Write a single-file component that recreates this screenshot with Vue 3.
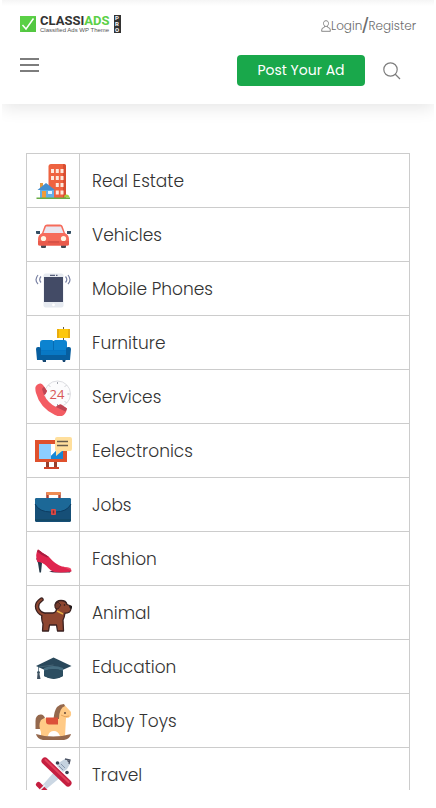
<template>
  <div class="page">
    <header class="site-header">
      <div class="header-row top-row">
        <a href="#" class="logo">
          <svg class="logo-mark" viewBox="0 0 16 16" aria-hidden="true">
            <rect width="16" height="16" fill="#5bd047" />
            <path d="M1 16 15 1h1v15z" fill="#4cbd3b" opacity=".5" />
            <path d="M2.500 9 6 13 13.500 2.500" fill="none" stroke="#fff" stroke-width="1.500" />
          </svg>
          <span class="logo-text">
            <span class="logo-name">CLASSI<span class="logo-accent">ADS</span></span>
            <span class="logo-tagline">Classified Ads WP Theme</span>
          </span>
          <span class="logo-badge"><span>P</span><span>R</span><span>O</span></span>
        </a>
        <nav class="account">
          <a href="#" class="account-link">
            <svg class="user-icon" viewBox="0 0 10 12" aria-hidden="true">
              <path d="M5 .7c1.600 0 2.500 1.100 2.500 2.700S6.500 6.500 5 6.500 2.500 5 2.500 3.400 3.400.7 5 .7zM3.500 6.200v1L1 8.500l-.4 2.800h8.800L9 8.500 6.500 7.200v-1" fill="none" stroke="#7d7d7d" stroke-width=".9" />
            </svg>
            Login
          </a>
          <span class="slash">/</span>
          <a href="#" class="account-link">Register</a>
        </nav>
      </div>
      <div class="header-row">
        <button type="button" class="menu-btn" aria-label="Menu">
          <span></span><span></span><span></span>
        </button>
        <div class="actions">
          <button type="button" class="post-btn">Post Your Ad</button>
          <button type="button" class="search-btn" aria-label="Search">
            <svg viewBox="0 0 18 18" aria-hidden="true">
              <circle cx="7.500" cy="7.500" r="6.700" />
              <path d="m12 12 5 5" />
            </svg>
          </button>
        </div>
      </div>
    </header>

    <main class="content">
      <table class="categories">
        <tbody>
          <tr v-for="category in categories" :key="category.name">
            <td class="icon-cell">
              <svg class="category-icon" viewBox="0 0 38 38" aria-hidden="true" v-html="category.icon"></svg>
            </td>
            <td class="name-cell">{{ category.name }}</td>
          </tr>
        </tbody>
      </table>
    </main>
  </div>
</template>

<script setup>
const categories = [
  {
    name: 'Real Estate',
    icon: `
      <rect x="14.500" y="2" width="17.500" height="34" rx="2.500" fill="#ee6340"/>
      <path d="M29 2h1a2 2 0 0 1 2 2v32h-3z" fill="#d94d31"/>
      <path d="M17 7h3v4h-3zM21.800 7h3v4h-3zM26.500 7h3v4h-3zM17 14h3v4h-3zM21.800 14h3v4h-3zM26.500 14h3v4h-3zM21.800 21h3v4h-3zM26.500 21h3v4h-3zM21.800 28.500h3v4h-3zM26.500 28.500h3v4h-3z" fill="#fde9dd"/>
      <path d="M6 21h3v5H6z" fill="#e39b3f"/>
      <path d="M6 27h14v9H6z" fill="#62aee8"/>
      <path d="m3.500 28 8.500-7 9 7z" fill="#458fce"/>
      <path d="M8 29h4v7H8z" fill="#f19b39"/>
      <path d="M14 29h4v3h-4z" fill="#e2f4ff"/>
      <path d="M30 35.500q0-3 2.500-3t3 3z" fill="#a7ce3d"/>
      <path d="M2.500 35.500h33.500V37h-33.500z" fill="#68ad45"/>`
  },
  {
    name: 'Vehicles',
    icon: `
      <path d="M7 27h5v4q0 1-1 1H8q-1 0-1-1zM27 27h5v4q0 1-1 1h-3q-1 0-1-1z" fill="#424953"/>
      <path d="M2 15h4v3H3q-1 0-1-1zM33 15h4v2q0 1-1 1h-3z" fill="#344e63"/>
      <path d="M8 17l2.500-7Q11 8.500 13 8.500h13q2 0 2.500 1.500L31 17q4 2 4 6v5q0 1.500-2 1.500H6q-2 0-2-1.500v-5q0-4 4-6z" fill="#f66b5a"/>
      <path d="m9.500 17 2.500-6.500h15L29.500 17z" fill="#e9e6ef"/>
      <path d="M4 25h31v3q0 1.500-2 1.500H6q-2 0-2-1.500z" fill="#e95b4c"/>
      <circle cx="9.500" cy="22.500" r="2.600" fill="#fff6e5"/>
      <circle cx="29.500" cy="22.500" r="2.600" fill="#fff6e5"/>
      <path d="M14 26h11" stroke="#c94a42"/>`
  },
  {
    name: 'Mobile Phones',
    icon: `
      <rect x="9.500" y="3.500" width="20" height="34" rx="2" fill="#e6eaf0"/>
      <path d="M10 7h19v25H10z" fill="#434b66"/>
      <path d="M16 5.300h5M22 5.300h1.500" stroke="#58607b" stroke-width="1.300"/>
      <circle cx="19.500" cy="34.800" r="1.400" fill="#fff"/>
      <path d="M4 5q-4 5 0 9M7 6.500q-2.600 3 0 6M34 5q4 5 0 9M31.500 6.500q2.600 3 0 6" fill="none" stroke="#7b83a5" stroke-width="1.200"/>`
  },
  {
    name: 'Furniture',
    icon: `
      <path d="M29.500 3v15" stroke="#665c4f" stroke-width="1"/>
      <path d="M23 5h13v9H23z" fill="#fdc70c"/>
      <path d="M23 5h2v9h-2zM34 5h2v9h-2z" fill="#e9ac0e"/>
      <path d="M8 35h4v3H9zM28 35h4l-1 3h-2z" fill="#164772"/>
      <path d="M6 19q0-3 3-3h9l1.500 1 1.500-1h9q3 0 3 3v12H6z" fill="#0c83d0"/>
      <path d="M19.500 17v10" stroke="#066cb3"/>
      <path d="M5 26h29v9H5z" fill="#0575c4"/>
      <path d="M2 25q0-2 2-2h1q2 0 2 2v5h25v-5q0-2 2-2h1q2 0 2 2l-1 11H3z" fill="#075e9f"/>
      <path d="M7 27h25v4H7z" fill="#0878c5"/>`
  },
  {
    name: 'Services',
    icon: `
      <circle cx="23.500" cy="16" r="13" fill="#fcfcfd" stroke="#dedfe3"/>
      <path d="M23.500 4v2M23.500 26v2M33.500 16h2M15 7.500l1 1M32 7.500l-1 1M32 24.500l-1-1" stroke="#a4a9b1"/>
      <text x="15.500" y="21" font-family="Open Sans, sans-serif" font-size="13" fill="#d95858">24</text>
      <path d="M1.500 9q1-3 4.500-3.500Q7.500 5 9 7l4 6q-1 3-3 4 4 8 12 12 2-3 5-2.500l6 4q-1 6-5 7.500-3 1-7-1Q6 30 2 15q-1-4-.5-6z" fill="#f35c63"/>
      <path d="m10 8.500 3 4.500q-1 3-3 4l-2-6zM22 29q2-3 5-2.500l6 4-1.500 3z" fill="#be4654"/>`
  },
  {
    name: 'Eelectronics',
    icon: `
      <path d="M12 30h3v6h-3zM20 30h3v6h-3z" fill="#96402d"/>
      <path d="M10 35h15v2H10z" fill="#cf4327"/>
      <path d="M1 8h32v22H1z" fill="#df512d"/>
      <path d="M5 12h24v15H5z" fill="#229ce5"/>
      <path d="M5 12h12v15H5z" fill="#8cceff"/>
      <path d="M17 12h12v7h-7l-5 5z" fill="#fff"/>
      <path d="M17 27v-3l5-5h7v8z" fill="#1687d5"/>
      <path d="M23 5h13q2 0 2 2v10q0 2-2 2h-8l-6 5v-5q-1 0-1-2V7q0-2 2-2z" fill="#ffdf9c"/>
      <path d="M23 9.500h11M23 13.500h11" stroke="#675c4b" stroke-width="1.400"/>`
  },
  {
    name: 'Jobs',
    icon: `
      <path d="M13.500 13V7.500h12V13" fill="none" stroke="#ac4032" stroke-width="2.500"/>
      <path d="M12.500 6h14v3h-14z" fill="#ef8c52"/>
      <rect x="1" y="12" width="36" height="24" rx="1.500" fill="#164f77"/>
      <path d="M1 14q0-2 2-2h32q2 0 2 2v4q-4 8-16 8h-4Q5 26 1 18z" fill="#1c6897"/>
      <path d="M1 18q4 8 16 8h4q12 0 16-8" fill="none" stroke="#0c3c61"/>
      <path d="M1 34h36" stroke="#11445b"/>
      <rect x="17" y="23" width="5" height="6" rx="1" fill="#db4945"/>
      <path d="M19.500 24.500v3" stroke="#752b35" stroke-width="1.500"/>`
  },
  {
    name: 'Fashion',
    icon: `
      <path d="M2 18q4 2 6 5l-1 9.500H5.500L4 23z" fill="#253a49"/>
      <path d="M15 31q3 1.500 6 1.500h15l1-2z" fill="#432d45"/>
      <path d="M4 9.500q4 3 11 7.500 7 8 13 9.500l8 1.500q1.500 1 1.500 3.500-10 1.500-17 .5-4-1-8-6-4-4-9-4-3-7 .5-12.500z" fill="#df254e"/>
      <path d="M4 9.500q4 3 11 7.500l-2 .5Q7 15 3 11.500z" fill="#a91d40"/>
      <path d="m28 26.500 8 1.500 1.500 2.500z" fill="#ed4664"/>`
  },
  {
    name: 'Animal',
    icon: `
      <path d="M7.500 5.500Q1 10 4 16q2 4 7 5" fill="none" stroke="#3a2120" stroke-width="4.400" stroke-linecap="round"/>
      <path d="M8 21q1-2 4-2h7q2 0 3.500-3l-1.500-5q1-4.500 6-4.500 5 0 6 4l4 1.500q.5 4-1.500 6-3 1.500-4.500 1-.5 4-2 7l.5 11h-6l-1-6h-7l-1 6H8.500l.5-7q-2-5-1-9z" fill="#8e4630" stroke="#3a2120" stroke-width="1.300" stroke-linejoin="round"/>
      <path d="M7.500 5.500Q1 10 4 16q2 4 7 5" fill="none" stroke="#8e4630" stroke-width="2" stroke-linecap="round"/>
      <path d="M24 8q-4 2-3 6l3 1 3-4z" fill="#743a2b" stroke="#3a2120" stroke-width=".8"/>
      <path d="m23 17 6 3" stroke="#e5ae45" stroke-width="1.500"/>
      <circle cx="30.500" cy="11" r=".8" fill="#241817"/>
      <path d="M35 12h3v2.500h-2z" fill="#211b1c"/>`
  },
  {
    name: 'Education',
    icon: `
      <path d="M10 19h19v9q-9 6-19 0z" fill="#244252"/>
      <path d="M19.500 9.500 37.500 18 19.500 26 2 18z" fill="#29485b"/>
      <path d="M10 20q9-4 19 0v3q-9-4-19 0z" fill="#466d80"/>
      <path d="M10 23q9-4 19 0v5q-9 5-19 0z" fill="#2c4d60"/>
      <path d="m19.500 17-15 2v5" fill="none" stroke="#4b6a7a" stroke-width=".8"/>
      <circle cx="4.500" cy="24.500" r="1.500" fill="#3b5361"/>
      <path d="M3.500 26h2l1 5H3z" fill="#3e5060"/>`
  },
  {
    name: 'Baby Toys',
    icon: `
      <path d="M1.500 27V19q0-6 5-6.500 3-.5 4.500 3.500l-4 3v8z" fill="#94684d"/>
      <path d="M7 34v-4q-3-7 0-12 2-2 6-2h7l4-8q2-5 7-4.500l6 6.500q1 6-5 6l-1 18h-5q-2-5-6-5-5 0-6 5z" fill="#ffca86"/>
      <path d="M19.500 17q1-9 3.500-12 3-3 7-3l1 2q-6 2-6 13z" fill="#94684d"/>
      <path d="M12 15.500h12v7H15q-3 0-3-3z" fill="#dc5039"/>
      <path d="M27 13q4 3 8 1" fill="none" stroke="#e7a45c"/>
      <circle cx="31" cy="11" r=".9" fill="#553a30"/>
      <path d="M2 32q17 5 35 0-1 5-7 6H9q-6-1-7-6z" fill="#94684d"/>`
  },
  {
    name: 'Travel',
    icon: `
      <path d="m26 6 5-3 5 5-3 5-4 3-6-6z" fill="#c5d2df"/>
      <path d="m31 3 5 1-1 4M33 4l2 2" fill="none" stroke="#4a5263" stroke-width="1.300"/>
      <path d="m27 8 4 4M25 10l4 4" stroke="#8797ae"/>
      <path d="M21 15 6 32l4 3 18-15z" fill="#cbd7e3"/>
      <path d="m11 5 23 22" stroke="#c51f40" stroke-width="7" stroke-linecap="round"/>
      <path d="m11.500 4 23 22" stroke="#e0415a" stroke-width="2" stroke-linecap="round"/>
      <path d="m4.500 28.500 8 8" stroke="#c51f40" stroke-width="5" stroke-linecap="round"/>
      <path d="m6 34 5-5" stroke="#eef1f5" stroke-width="1.500"/>
      <circle cx="23.500" cy="7" r="1.800" fill="#3a4252"/>
      <circle cx="33" cy="16.500" r="1.800" fill="#3a4252"/>`
  }
];
</script>

<style>
body {
  margin: 0;
  background: #fff;
}
</style>

<style scoped>
.page {
  height: calc(100vh - 18px);
  margin: 0 2px;
  overflow: hidden;
  background: #fff;
  color: #333;
  font-family: Poppins, Inter, "Open Sans", sans-serif;
}
.site-header {
  display: flex;
  flex-direction: column;
  gap: 16px;
  padding: 12px 18px 18px;
  background: linear-gradient(#f5f5f5, #fff 6px);
  box-shadow: 0 4px 16px rgba(0, 0, 0, 0.1);
}
.header-row {
  display: flex;
  align-items: center;
  justify-content: space-between;
}
.top-row {
  height: 27px;
}
a {
  color: inherit;
  text-decoration: none;
}
button {
  padding: 0;
  border: 0;
  background: none;
  font-family: inherit;
  cursor: pointer;
}
.logo {
  display: flex;
  align-items: center;
  align-self: flex-start;
  height: 23px;
  gap: 4px;
}
.logo-mark {
  width: 16px;
  height: 16px;
}
.logo-text {
  display: flex;
  flex-direction: column;
}
.logo-name {
  font: bold 13px/12px Roboto, sans-serif;
  color: #333;
}
.logo-accent {
  color: #5bd047;
}
.logo-tagline {
  font: 6px/6px "Liberation Sans", sans-serif;
  color: #555;
}
.logo-badge {
  display: flex;
  flex-direction: column;
  align-items: center;
  width: 7px;
  background: #333;
  color: #fff;
  font: bold 6px/6px Roboto, sans-serif;
}
.account {
  display: flex;
  align-items: center;
  height: 32px;
  color: #6c6c6c;
}
.account-link {
  display: flex;
  align-items: center;
  font-size: 12px;
  font-weight: 300;
  line-height: 20px;
}
.user-icon {
  width: 10px;
  height: 12px;
}
.slash {
  font: 22px/24px "Liberation Sans", sans-serif;
}
.menu-btn {
  display: flex;
  flex-direction: column;
  align-self: flex-start;
  gap: 4px;
  padding: 3px 0;
}
.menu-btn span {
  width: 19px;
  height: 2px;
  background: #7d7d7d;
}
.actions {
  display: flex;
  align-items: center;
  gap: 18px;
  padding-right: 15px;
}
.post-btn {
  width: 128px;
  height: 31px;
  border-radius: 4px;
  background: #19a84b;
  color: #fff;
  font-size: 14px;
}
.search-btn {
  width: 18px;
  height: 22px;
}
.search-btn svg {
  display: block;
  width: 18px;
  height: 18px;
  fill: none;
  stroke: #7d7d7d;
  stroke-width: 1.2;
}
.content {
  padding: 49px 24px;
}
.categories {
  width: 100%;
  border-collapse: collapse;
}
.categories td {
  height: 53px;
  padding: 0;
  border: 1px solid #ccc;
}
.icon-cell {
  width: 52px;
}
.category-icon {
  display: block;
  width: 38px;
  height: 38px;
  margin: 0 auto;
}
.categories .name-cell {
  padding: 0 12px;
  font-size: 17px;
  font-weight: 300;
  line-height: 24px;
}
</style>
